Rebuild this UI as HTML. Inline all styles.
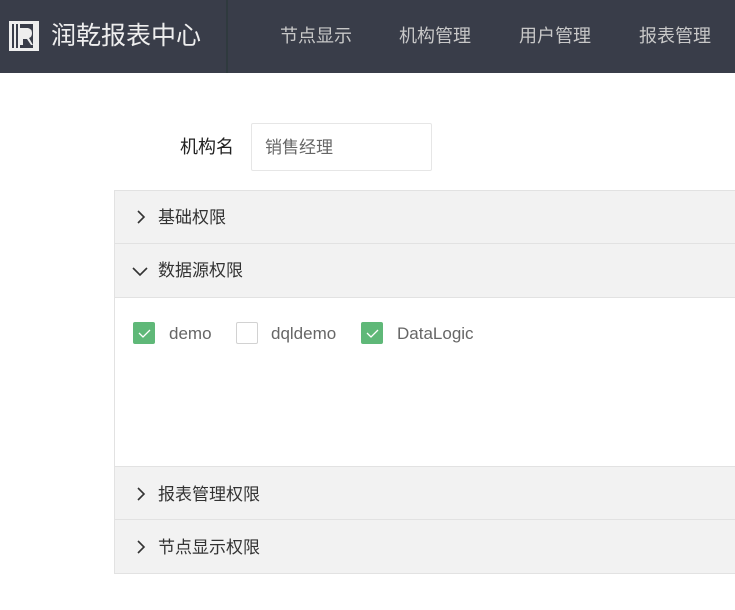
<!DOCTYPE html>
<html><head><meta charset="utf-8"><style>
*{margin:0;padding:0;box-sizing:border-box}
body{width:735px;height:610px;overflow:hidden;background:#fff;font-family:"Liberation Sans","Noto Sans CJK SC",sans-serif;position:relative}
.hd{position:absolute;left:0;top:0;width:735px;height:73px;background:#393d49}
.sep{position:absolute;left:226px;top:0;width:2px;height:73px;background:#2f3a3e}
.logo{position:absolute;left:9px;top:21px}
.title{position:absolute;left:51px;top:20px;font-size:25px;color:#eee;line-height:32px}
.nav{position:absolute;top:23px;font-size:18px;color:#c8c8c8;line-height:26px}
.lbl{position:absolute;left:180px;top:135px;font-size:18px;color:#222;line-height:24px}
.inp{position:absolute;left:251px;top:123px;width:181px;height:48px;border:1px solid #e6e6e6;border-radius:2px;font-size:17px;color:#666;padding:13px 0 0 13px;line-height:22px}
.pn{position:absolute;left:114px;top:190px;width:640px;height:384px;border:1px solid #e2e2e2}
.row{position:absolute;left:0;width:100%;background:#f2f2f2;border-bottom:1px solid #e2e2e2;font-size:17px;color:#333}
.row span{position:absolute;left:43px;top:16px;line-height:22px}
.row svg{position:absolute;left:20px;top:19px}
.cb{position:absolute;top:322px;width:22px;height:22px;border-radius:2px}
.on{background:#5fb878}
.off{border:1px solid #d2d2d2;background:#fff}
.ct{position:absolute;top:323px;font-size:17px;color:#666;line-height:22px}
</style></head><body>
<div class="hd">
<svg class="logo" width="30" height="30" viewBox="0 0 30 30"><rect x="0" y="0" width="30" height="30" fill="#eee"/><rect x="3" y="3" width="2" height="24" fill="#393d49"/><rect x="7" y="3" width="2" height="24" fill="#393d49"/><path d="M11 3h13v24h-13v-3h3v-6h4l4 6h2l-4-7q3-1 3-5t-4-5h-8z" fill="#393d49"/><rect x="14" y="9" width="6" height="5" fill="#eee"/></svg>
<div class="title">润乾报表中心</div>
<div class="sep"></div>
<div class="nav" style="left:280px">节点显示</div>
<div class="nav" style="left:399px">机构管理</div>
<div class="nav" style="left:519px">用户管理</div>
<div class="nav" style="left:639px">报表管理</div>
</div>
<div class="lbl">机构名</div>
<div class="inp">销售经理</div>
<div class="pn">
<div class="row" style="top:0;height:53px"><svg width="12" height="14"><path d="M3 1l6 6-6 6" stroke="#333" stroke-width="1.6" fill="none"/></svg><span>基础权限</span></div>
<div class="row" style="top:53px;height:54px"><svg width="16" height="12" style="left:17px;top:22px"><path d="M1 2l7 7 7-7" stroke="#333" stroke-width="1.6" fill="none"/></svg><span>数据源权限</span></div>
<div class="row" style="top:275px;height:54px;border-top:1px solid #e2e2e2"><svg width="12" height="14" style="top:20px"><path d="M3 1l6 6-6 6" stroke="#333" stroke-width="1.6" fill="none"/></svg><span style="top:17px">报表管理权限</span></div>
<div class="row" style="top:329px;height:53px;border-bottom:none"><svg width="12" height="14" style="top:20px"><path d="M3 1l6 6-6 6" stroke="#333" stroke-width="1.6" fill="none"/></svg><span style="top:17px">节点显示权限</span></div>
</div>
<div class="cb on" style="left:133px"><svg width="22" height="22"><path d="M6 11l4 4 7-7" stroke="#fff" stroke-width="1.3" fill="none"/></svg></div>
<div class="ct" style="left:169px">demo</div>
<div class="cb off" style="left:236px"></div>
<div class="ct" style="left:271px">dqldemo</div>
<div class="cb on" style="left:361px"><svg width="22" height="22"><path d="M6 11l4 4 7-7" stroke="#fff" stroke-width="1.3" fill="none"/></svg></div>
<div class="ct" style="left:397px">DataLogic</div>
</body></html>
